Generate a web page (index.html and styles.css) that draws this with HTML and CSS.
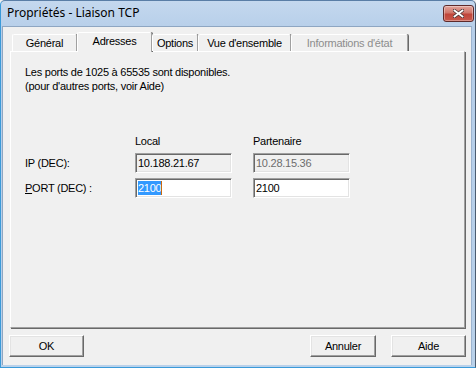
FILE: index.html
```html
<!DOCTYPE html>
<html lang="fr">
<head>
  <meta charset="UTF-8">
  <title>Propriétés - Liaison TCP</title>
  <link rel="stylesheet" href="styles.css">
</head>
<body>

<div class="window">
  <div class="titlebar">
    <span class="title">Propriétés - Liaison TCP</span>
    <button class="close">
      <svg width="11" height="9" viewBox="0 0 11 9">
        <path d="M1.5 1.5 L9.5 7.5 M9.5 1.5 L1.5 7.5" stroke="#4a3434" stroke-width="3.4" stroke-linecap="square"/>
        <path d="M1.5 1.5 L9.5 7.5 M9.5 1.5 L1.5 7.5" stroke="#fff" stroke-width="1.8" stroke-linecap="square"/>
      </svg>
    </button>
  </div>

  <div class="client">
    <div class="tabs">
      <div class="tab tab-general">Général</div>
      <div class="tab tab-adresses active">Adresses</div>
      <div class="tab tab-options">Options</div>
      <div class="tab tab-vue">Vue d'ensemble</div>
      <div class="tab tab-info disabled">Informations d'état</div>
    </div>

    <div class="panel">
      <p class="info">Les ports de 1025 à 65535 sont disponibles.<br>(pour d'autres ports, voir Aide)</p>

      <div class="grid">
        <span></span>
        <span class="col-head">Local</span>
        <span class="col-head">Partenaire</span>

        <span class="lbl">IP (DEC):</span>
        <div class="field readonly">10.188.21.67</div>
        <div class="field readonly disabled">10.28.15.36</div>

        <span class="lbl"><u>P</u>ORT (DEC) :</span>
        <div class="field"><span class="sel">2100</span><span class="caret"></span></div>
        <div class="field">2100</div>
      </div>
    </div>

    <div class="buttons">
      <button class="btn btn-ok">OK</button>
      <span class="spacer"></span>
      <button class="btn btn-cancel">Annuler</button>
      <button class="btn btn-help">Aide</button>
    </div>
  </div>
</div>

</body>
</html>
```

FILE: styles.css
```css
body {
  margin: 0;
  font-family: "Liberation Sans", Arial, sans-serif;
  font-size: 11px;
  letter-spacing: -0.25px;
  color: #000;
  background: #f0f0f0;
}
.window {
  width: 476px;
  height: 368px;
  box-sizing: border-box;
  display: flex;
  flex-direction: column;
  background: linear-gradient(#c4d8ee, #b6cee9 30px, #b9d1ea);
  border-left: 1px solid #3a9ad9;
  border-bottom: 1px solid #3a9ad9;
  border-top: 1px solid #5a7ea6;
  border-right: 1px solid #4b5c70;
  border-radius: 5px 5px 0 0;
  padding: 0 3px 2px 1px;
}
.titlebar {
  height: 25px;
  display: flex;
  align-items: flex-start;
}
.title {
  font-family: "Noto Sans", "Liberation Sans", sans-serif;
  font-size: 12px;
  letter-spacing: 0;
  line-height: 24px;
  padding-left: 5px;
  flex: 1;
}
.close {
  margin-top: 4px;
  margin-right: -2px;
  width: 31px;
  height: 17px;
  padding: 0;
  border: 1px solid #5e2a2a;
  border-radius: 3px;
  background: linear-gradient(#e2a49b, #d0766a 45%, #c0453a 55%, #c9594c);
  box-shadow: inset 0 0 0 1px rgba(255,255,255,0.35);
  display: flex;
  align-items: center;
  justify-content: center;
}
.client {
  flex: 1;
  display: flex;
  flex-direction: column;
  background: #f0f0f0;
  padding: 5px 5px 8px 7px;
  border: 1px solid #8ea6c2;
  border-bottom: none;
  border-right-color: #9db4cf;
}
.tabs {
  height: 19px;
  display: flex;
  align-items: flex-end;
  margin-left: 2px;
  position: relative;
  z-index: 1;
}
.tab {
  height: 17px;
  box-sizing: border-box;
  border-top: 1px solid #fff;
  border-left: 1px solid #fff;
  border-right: 1px solid #a0a0a0;
  box-shadow: 1px 0 0 #696969;
  border-radius: 2px 2px 0 0;
  text-align: center;
  line-height: 16px;
  background: #f0f0f0;
}
.tab.active {
  height: 20px;
  margin-bottom: -1px;
  line-height: 16px;
}
.tab.disabled {
  color: #8d8d8d;
}
.tab-general { width: 65px; }
.tab-adresses { width: 75px; }
.tab-options { width: 46px; }
.tab-vue { width: 93px; }
.tab-info { width: 117px; }
.panel {
  flex: 1;
  margin-right: 1px;
  border-top: 1px solid #fff;
  border-left: 1px solid #fff;
  border-right: 1px solid #a0a0a0;
  border-bottom: 1px solid #a0a0a0;
  box-shadow: 1px 1px 0 #696969;
  padding: 13px 14px;
}
.info {
  margin: 0;
  line-height: 14px;
}
.grid {
  margin-top: 41px;
  display: grid;
  grid-template-columns: 89px 97px 97px;
  grid-template-rows: 14px 20px 20px;
  column-gap: 21px;
  row-gap: 5px;
  align-items: center;
}
.col-head {
  line-height: 14px;
}
.lbl {
  line-height: 14px;
}
.field {
  height: 20px;
  box-sizing: border-box;
  border: 1px solid;
  border-color: #a0a0a0 #fff #fff #a0a0a0;
  box-shadow: inset 1px 1px 0 #696969, inset -1px -1px 0 #e3e3e3;
  background: #fff;
  padding: 2px 2px 0 2px;
  line-height: 14px;
  display: flex;
  align-items: flex-start;
}
.field.readonly {
  background: #f0f0f0;
}
.field.disabled {
  color: #6d6d6d;
}
.sel {
  background: #3399ff;
  color: #fff;
}
.caret {
  width: 1px;
  height: 14px;
  background: #c86a10;
}
.buttons {
  margin-top: 7px;
  height: 22px;
  display: flex;
  gap: 15px;
  margin-left: -1px;
}
.spacer {
  flex: 1;
}
.btn {
  height: 22px;
  box-sizing: border-box;
  padding: 0;
  font-family: inherit;
  font-size: 11px;
  letter-spacing: -0.25px;
  color: #000;
  background: #f0f0f0;
  border: 1px solid;
  border-color: #fff #696969 #696969 #fff;
  box-shadow: inset -1px -1px 0 #a0a0a0, inset 1px 1px 0 #e3e3e3;
}
.btn-ok { width: 75px; }
.btn-cancel { width: 66px; }
.btn-help { width: 75px; }
```
